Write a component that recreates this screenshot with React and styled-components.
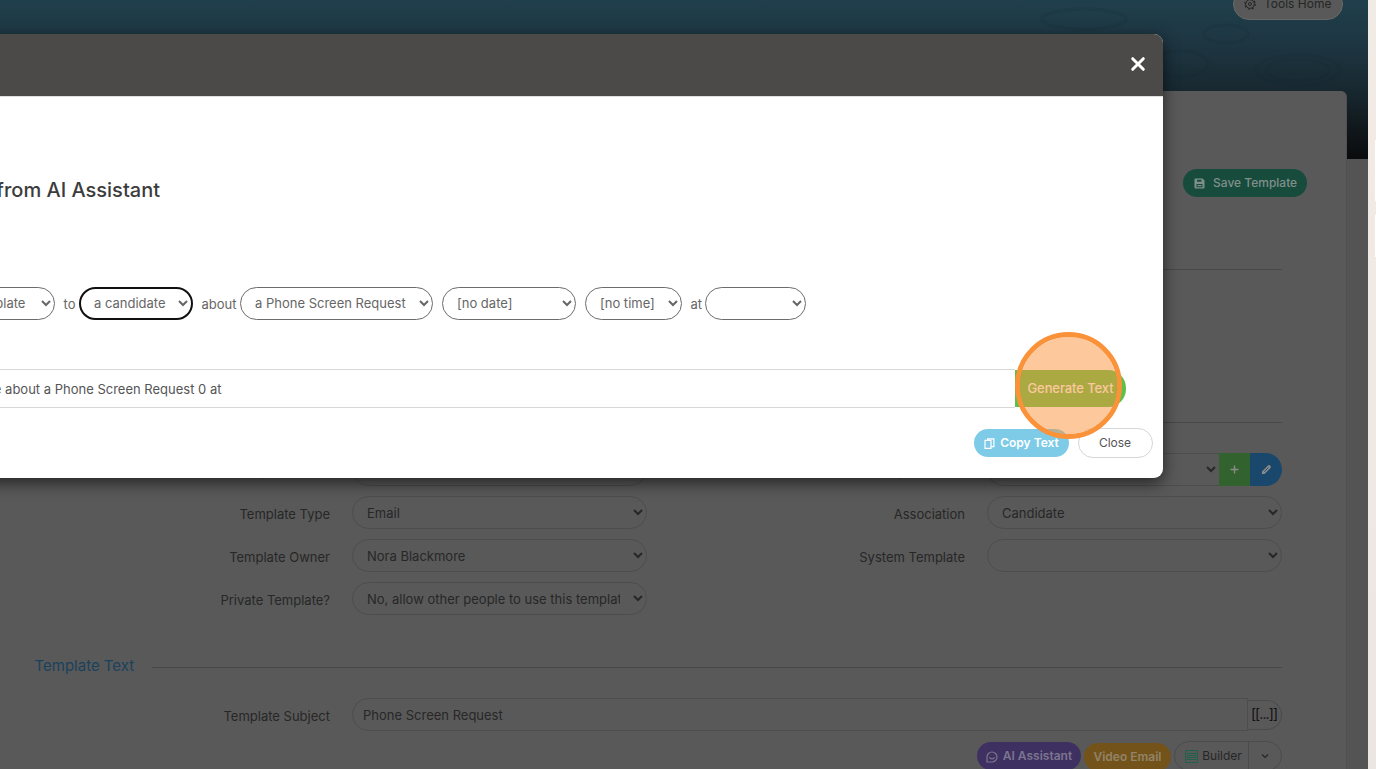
import React from "react";
import styled, { createGlobalStyle } from "styled-components";

const Global = createGlobalStyle`
  * { box-sizing: border-box; }
  html, body { margin: 0; height: 100%; overflow: hidden; }
  body { font: 13px/20px Inter, "Liberation Sans", sans-serif; color: #272727; }
  button, input, select { font: inherit; margin: 0; }
`;

const Screen = styled.div`
  position: relative;
  display: grid;
  grid-template-columns: 1368px 8px;
  width: 1376px;
  height: 769px;
  overflow: hidden;
`;

const Page = styled.main`
  height: 769px;
  background: #545454;
  overflow: hidden;
  display: grid;
  grid-template-rows: 769px;
  grid-template-columns: 1368px;
`;

const Hero = styled.div`
  grid-area: 1 / 1;
  height: 159px;
  background: linear-gradient(#203f4c 0, #1d3440 50px, #182830 90px, #11191d 125px, #0a0b0c 159px);
`;

const Ripples = styled.svg`
  display: block;
  width: 1368px;
  height: 159px;
`;

const Content = styled.div`
  grid-area: 1 / 1;
  display: flex;
  flex-direction: column;
`;

const TopBar = styled.div`
  display: flex;
  justify-content: flex-end;
  align-items: flex-end;
  height: 20px;
  margin-bottom: 71px;
  padding-right: 25px;
`;

const ToolsHome = styled.button`
  display: flex;
  align-items: center;
  gap: 8px;
  width: 110px;
  height: 32px;
  flex: none;
  padding: 0 0 0 10px;
  border: 1px solid #686868;
  border-radius: 16px;
  background: #595959;
  color: #262626;
  font-size: 12px;
`;

const Card = styled.section`
  height: 700px;
  width: 1347px;
  padding: 78px 64px 0 35px;
  background: #595959;
  border-right: 1px solid #505050;
  border-radius: 0 6px 0 0;
`;

const Actions = styled.div`
  display: flex;
  justify-content: flex-end;
  margin-right: -25px;
`;

const SaveButton = styled.button`
  display: flex;
  align-items: center;
  gap: 8px;
  width: 124px;
  height: 28px;
  padding: 0 0 0 11px;
  border: 0;
  border-radius: 14px;
  background: #174b3c;
  color: #7f908b;
  font-size: 12px;
  font-weight: 500;
`;

const Rule = styled.hr`
  height: 1px;
  border: 0;
  margin: ${p => p.$top}px 0 0;
  background: #484848;
`;

const FormGrid = styled.div`
  display: grid;
  grid-template-columns: 295px 295px 296px 295px;
  grid-auto-rows: 33px;
  column-gap: 22px;
  row-gap: 10px;
  margin-top: 30px;
  width: 1247px;
`;

const Label = styled.label`
  text-align: right;
  line-height: 20px;
  padding-top: 8px;
`;

const FieldSelect = styled.select`
  width: 100%;
  height: 33px;
  padding: 0 10px;
  border: 1px solid #4d4d4d;
  border-radius: 17px;
  background: transparent;
  color: #272727;
  outline: 0;
`;

const SelectGroup = styled.div`
  display: grid;
  grid-template-columns: 232px 31px 32px;
  ${FieldSelect} { border-radius: 17px 0 0 17px; border-right: 0; padding-right: 0; }
`;

const SquareButton = styled.button`
  display: grid;
  place-items: center;
  padding: 0;
  border: 0;
  border-radius: ${p => (p.$last ? "0 17px 17px 0" : "0")};
  background: ${p => p.$bg};
  color: #8b8b8b;
`;

const SectionTitle = styled.h2`
  display: flex;
  align-items: center;
  gap: 17.500px;
  height: 24px;
  margin: 39px 0 0 -0.500px;
  font-size: 15px;
  font-weight: 400;
  color: #1a425c;
  &::after { content: ""; flex: 1; height: 1px; background: #484848; margin-top: 3px; }
`;

const SubjectRow = styled.div`
  display: grid;
  grid-template-columns: 295px 896px 34px;
  margin-top: 20px;
`;

const SubjectInput = styled.input`
  height: 33px;
  margin-left: 22px;
  width: 896px;
  padding: 0 10px;
  border: 1px solid #4d4d4d;
  border-radius: 17px 0 0 17px;
  background: transparent;
  color: #272727;
`;

const MergeButton = styled.button`
  width: 34px;
  height: 30px;
  margin: 2px 0 0 22px;
  padding: 0 1px 2px 0;
  border: 1px solid #4b4b4b;
  border-left: 0;
  border-radius: 0 15px 15px 0;
  background: transparent;
  color: #111;
  font-size: 14px;
  letter-spacing: -0.9px;
`;

const Toolbar = styled.div`
  display: flex;
  justify-content: flex-end;
  align-items: flex-start;
  gap: 3px;
  margin-top: 10px;
`;

const Pill = styled.button`
  display: flex;
  align-items: center;
  justify-content: center;
  gap: 5px;
  width: ${p => p.$w}px;
  height: 28px;
  margin-top: ${p => p.$top}px;
  padding: 0;
  border: 0;
  border-radius: 14px;
  background: ${p => p.$bg};
  color: ${p => p.$fg};
  font-weight: 600;
  font-size: 12px;
  svg { position: relative; top: ${p => p.$iconDrop || 0}px; }
`;

const Split = styled.div`
  display: flex;
  width: 108px;
  height: 30px;
  border: 1px solid #4b4b4b;
  border-radius: 15px;
`;

const SplitButton = styled.button`
  display: flex;
  align-items: center;
  justify-content: center;
  gap: 4px;
  padding: ${p => (p.$divided ? "0" : "0 0 0 4px")};
  width: ${p => p.$w}px;
  border: 0;
  border-left: ${p => (p.$divided ? "1px solid #4b4b4b" : "0")};
  background: transparent;
  color: #262626;
  font-size: 12px;
`;

const Strip = styled.aside`
  height: 769px;
  background: linear-gradient(#f1ebe5, #f1e9e4 250px, #ece6e3);
  display: flex;
  flex-direction: column;
  align-items: flex-end;
  padding-top: 140px;
`;

const StripCard = styled.div`
  width: 1px;
  height: ${p => p.$h}px;
  margin-bottom: 14px;
  background: #fff;
`;

const Modal = styled.div`
  position: absolute;
  left: -20px;
  top: 34px;
  width: 1183px;
  height: 444px;
  border-radius: 9px;
  background: #fff;
  box-shadow: 0 5px 16px rgba(0, 0, 0, 0.6);
  color: #555;
`;

const ModalHeader = styled.header`
  display: flex;
  align-items: center;
  justify-content: flex-end;
  height: 62px;
  padding: 0 17px 2px 0;
  border-radius: 9px 9px 0 0;
  background: #4c4a48;
`;

const ModalBody = styled.div`
  padding: 80px 10px 0 16px;
  border-top: 1px solid #dedede;
`;

const Title = styled.h1`
  margin: 0;
  font-size: 20px;
  line-height: 26px;
  font-weight: 500;
  color: #3c3c3c;
  width: 164px;
  display: flex;
  justify-content: flex-end;
  white-space: nowrap;
`;

const Sentence = styled.div`
  display: flex;
  align-items: center;
  margin: 84px 0 0 -75px;
  color: #666;
`;

const Word = styled.span`
  width: ${p => p.$w}px;
  padding-left: 8.500px;
  white-space: nowrap;
`;

const PromptSelect = styled.select`
  width: ${p => p.$w}px;
  height: 33px;
  margin-left: ${p => p.$gap || 0}px;
  padding: ${p => (p.$active ? "0 9px 1px" : "0 10px 1px")};
  border: ${p => (p.$active ? "2px solid #101010" : "1px solid #6c6c6c")};
  border-radius: 17px;
  background: #fff;
  color: #666;
  outline: 0;
`;

const PromptRow = styled.div`
  display: flex;
  align-items: center;
  margin-top: 49px;
  height: 39px;
`;

const PromptText = styled.div`
  width: 1019px;
  height: 39px;
  padding-top: 9px;
  border: solid #d8d8d8;
  border-width: 1px 0;
  color: #555;
`;

const Prompt = styled.span`
  display: flex;
  justify-content: flex-end;
  width: 225.500px;
  white-space: nowrap;
`;

const GenerateButton = styled.button`
  width: 111px;
  height: 37px;
  padding: 0 0 1px;
  border: 0;
  border-radius: 0 18px 18px 0;
  background: #5cc04a;
  color: #fff;
  font-weight: 500;
  letter-spacing: -0.1px;
`;

const Footer = styled.footer`
  display: flex;
  justify-content: flex-end;
  align-items: center;
  gap: 9px;
  margin-top: 20px;
`;

const CloseButton = styled.button`
  width: 75px;
  height: 30px;
  padding: 0 1px 0 0;
  border: 1px solid #d6d6d6;
  border-radius: 15px;
  background: #fff;
  color: #555;
  font-size: 12px;
`;

const ClickMarker = styled.div`
  position: absolute;
  left: 1015px;
  top: 332px;
  width: 107px;
  height: 107px;
  border: 5px solid #fa923a;
  border-radius: 50%;
  background: rgba(250, 146, 58, 0.5);
  background-clip: padding-box;
`;

const Gear = () => (
  <svg width="12" height="12" viewBox="0 0 12 12" fill="none" stroke="currentColor">
    <circle cx="6" cy="6" r="4.300" />
    <circle cx="6" cy="6" r="1.500" />
    <circle cx="6" cy="6" r="5.200" strokeWidth="1.200" strokeDasharray="2 2.084" />
  </svg>
);

const Disk = () => (
  <svg width="11" height="11" viewBox="0 0 11 11">
    <path fill="currentColor" fillRule="evenodd" d="M1.500.5h7l2 2v7a1 1 0 0 1-1 1h-8a1 1 0 0 1-1-1v-8a1 1 0 0 1 1-1zM3 1.700v2h4.500v-2zM2.500 6v3.200h6V6zM3.500 6.900h4v1.300h-4z" />
  </svg>
);

const Plus = () => (
  <svg width="9" height="9" viewBox="0 0 9 9" stroke="currentColor" strokeWidth="1.400">
    <path d="M4.500.5v8M.5 4.500h8" />
  </svg>
);

const Pencil = () => (
  <svg width="11" height="11" viewBox="0 0 11 11" fill="none" stroke="currentColor">
    <path strokeWidth="3.600" strokeLinecap="round" d="M3 8l5-5" />
    <path fill="currentColor" stroke="none" d="M.7 10.300l.8-3.500 2.700 2.700z" />
    <path stroke="#184466" strokeWidth=".9" d="M3.300 7.700l4.200-4.200" />
  </svg>
);

const Face = () => (
  <svg width="12" height="12" viewBox="0 0 12 12" fill="none" stroke="currentColor" strokeWidth="1.200">
    <path d="M1 11V6a5 5 0 1 1 5 5z" />
    <path d="M3.500 6.200c.8 2.300 4.200 2.300 5 0" />
  </svg>
);

const Layout = () => (
  <svg width="13" height="13" viewBox="0 0 13 13" fill="none" stroke="#21604b">
    <path d="M.5.5h12v3H.5zM2.500 5.500h8v2h-8zM.5 9.500h12v3H.5zM.5 3.500v6M12.500 3.500v6" />
  </svg>
);

const Copy = () => (
  <svg width="11" height="11" viewBox="0 0 11 11" fill="none" stroke="currentColor" strokeWidth="1.200">
    <path d="M3.600 2.400V.8h6.300v7.800H7.200M1 2.400h6v7.900H1z" />
  </svg>
);

const Chevron = () => (
  <svg width="8" height="6" viewBox="0 0 8 6" fill="none" stroke="currentColor" strokeWidth="1.200">
    <path d="M1 1.500l3 3 3-3" />
  </svg>
);

const Cross = () => (
  <svg width="16" height="16" viewBox="0 0 16 16" stroke="#fff" strokeWidth="3" strokeLinecap="round">
    <path d="M2.700 2.700l10.600 10.600M13.300 2.700L2.700 13.300" />
  </svg>
);

const Choice = ({ children }) => (
  <FieldSelect>
    <option>{children}</option>
  </FieldSelect>
);

export default function App() {
  return (
    <Screen>
      <Global />
      <Page>
        <Hero>
          <Ripples viewBox="0 0 1368 159" fill="none" stroke="#122731" strokeOpacity=".13" strokeWidth="3">
            <ellipse cx="1084" cy="19" rx="42" ry="10" />
            <ellipse cx="1226" cy="34" rx="22" ry="9" />
            <ellipse cx="1298" cy="70" rx="42" ry="15" />
            <ellipse cx="1298" cy="70" rx="32" ry="11" />
            <ellipse cx="1180" cy="64" rx="28" ry="13" />
          </Ripples>
        </Hero>
        <Content>
          <TopBar>
            <ToolsHome><Gear />Tools Home</ToolsHome>
          </TopBar>
          <Card>
            <Actions>
              <SaveButton><Disk />Save Template</SaveButton>
            </Actions>
            <Rule $top={72} />
            <Rule $top={152} />
            <FormGrid>
              <Label>Template Name</Label>
              <Choice />
              <Label>Template Class</Label>
              <SelectGroup>
                <Choice />
                <SquareButton $bg="#32622d"><Plus /></SquareButton>
                <SquareButton $bg="#1a486c" $last><Pencil /></SquareButton>
              </SelectGroup>
              <Label>Template Type</Label>
              <Choice>Email</Choice>
              <Label>Association</Label>
              <Choice>Candidate</Choice>
              <Label>Template Owner</Label>
              <Choice>Nora Blackmore</Choice>
              <Label>System Template</Label>
              <Choice />
              <Label>Private Template?</Label>
              <Choice>No, allow other people to use this template</Choice>
            </FormGrid>
            <SectionTitle>Template Text</SectionTitle>
            <SubjectRow>
              <Label>Template Subject</Label>
              <SubjectInput defaultValue="Phone Screen Request" />
              <MergeButton>[[...]]</MergeButton>
            </SubjectRow>
            <Toolbar>
              <Pill $w={104} $top={1} $iconDrop={1} $bg="#3f3062" $fg="#7b758e"><Face />AI Assistant</Pill>
              <Pill $w={87} $top={2} $bg="#74531a" $fg="#918469">Video Email</Pill>
              <Split>
                <SplitButton $w={73}><Layout />Builder</SplitButton>
                <SplitButton $w={33} $divided><Chevron /></SplitButton>
              </Split>
            </Toolbar>
          </Card>
        </Content>
      </Page>
      <Strip>
        <StripCard $h={61} />
        <StripCard $h={42} />
      </Strip>
      <Modal>
        <ModalHeader><Cross /></ModalHeader>
        <ModalBody>
          <Title>from AI Assistant</Title>
          <Sentence>
            <PromptSelect $w={134}><option>email template</option></PromptSelect>
            <Word $w={24}>to</Word>
            <PromptSelect $w={114} $active><option>a candidate</option></PromptSelect>
            <Word $w={47}>about</Word>
            <PromptSelect $w={193}><option>a Phone Screen Request</option></PromptSelect>
            <PromptSelect $w={134} $gap={9}><option>[no date]</option></PromptSelect>
            <PromptSelect $w={97} $gap={9}><option>[no time]</option></PromptSelect>
            <Word $w={23}>at</Word>
            <PromptSelect $w={101}><option /></PromptSelect>
          </Sentence>
          <PromptRow>
            <PromptText><Prompt>template about a Phone Screen Request 0 at</Prompt></PromptText>
            <GenerateButton>Generate Text</GenerateButton>
          </PromptRow>
          <Footer>
            <Pill $w={95} $top={0} $bg="#7ecbe8" $fg="#fff"><Copy />Copy Text</Pill>
            <CloseButton>Close</CloseButton>
          </Footer>
        </ModalBody>
      </Modal>
      <ClickMarker />
    </Screen>
  );
}
